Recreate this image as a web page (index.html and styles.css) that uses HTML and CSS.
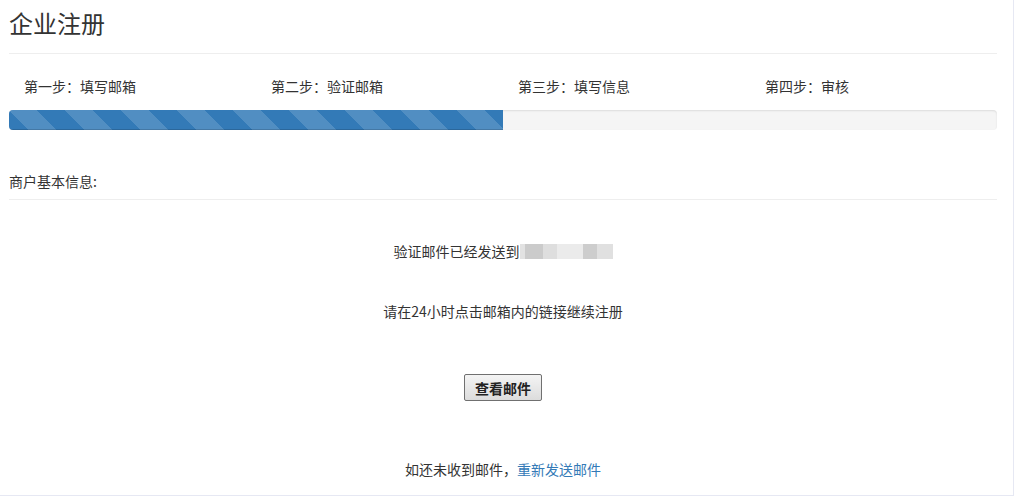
FILE: index.html
```html
<!DOCTYPE html>
<html lang="zh-CN">
<head>
<meta charset="utf-8">
<title>企业注册</title>
<link rel="stylesheet" href="styles.css">
</head>
<body>
<div class="page">
  <h1 class="page-title">企业注册</h1>
  <div class="steps">
    <div class="step">第一步：填写邮箱</div>
    <div class="step">第二步：验证邮箱</div>
    <div class="step">第三步：填写信息</div>
    <div class="step">第四步：审核</div>
  </div>
  <div class="progress">
    <div class="progress-bar" style="width: 50%"></div>
  </div>
  <div class="section-title">商户基本信息:</div>
  <div class="notice">
    <p class="line first">验证邮件已经发送到<span class="masked"></span></p>
    <p class="line">请在24小时点击邮箱内的链接继续注册</p>
    <div class="btn-row"><button class="btn">查看邮件</button></div>
    <p class="line resend">如还未收到邮件，<a class="link" href="#">重新发送邮件</a></p>
  </div>
</div>
</body>
</html>
```
FILE: styles.css
```css
* { box-sizing: border-box; }
html, body { margin: 0; padding: 0; background: #fff; }
body {
  font-family: "Noto Sans CJK SC", "Liberation Sans", sans-serif;
  font-size: 14px;
  color: #333;
}
.page {
  width: 1014px;
  height: 496px;
  padding: 0 16px 0 9px;
  border-right: 1px solid #e6e8f3;
  border-bottom: 1px solid #e6e8f3;
}
.page-title {
  margin: 0;
  height: 54px;
  line-height: 45px;
  font-size: 24px;
  font-weight: normal;
  color: #333;
  border-bottom: 1px solid #eeeeee;
}
.steps {
  display: grid;
  grid-template-columns: repeat(4, 1fr);
  margin-top: 22px;
  height: 20px;
  line-height: 20px;
}
.step { padding-left: 15px; }
.progress {
  margin-top: 14px;
  height: 20px;
  background: #f5f5f5;
  border-radius: 4px;
  overflow: hidden;
  box-shadow: inset 0 1px 2px rgba(0,0,0,.1);
}
.progress-bar {
  height: 100%;
  background-color: #337ab7;
  background-image: linear-gradient(45deg, rgba(255,255,255,.15) 25%, transparent 25%, transparent 50%, rgba(255,255,255,.15) 50%, rgba(255,255,255,.15) 75%, transparent 75%, transparent);
  background-size: 56px 56px;
  box-shadow: inset 0 -1px 0 rgba(0,0,0,.15);
}
.section-title {
  margin-top: 41px;
  line-height: 20px;
  padding-bottom: 8px;
  border-bottom: 1px solid #eeeeee;
}
.notice { text-align: center; }
.line { margin: 0; line-height: 20px; }
.line.first { margin-top: 41px; }
.line + .line { margin-top: 40px; }
.masked {
  display: inline-block;
  width: 93px;
  height: 15px;
  vertical-align: -2px;
  background: linear-gradient(90deg, #e2e2e2 0, #e2e2e2 5px, #cbcbcb 5px, #cbcbcb 23px, #dedede 23px, #dedede 37px, #ebebeb 37px, #ebebeb 63px, #cdcdcd 63px, #cdcdcd 77px, #e0e0e0 77px, #e0e0e0 93px);
}
.btn-row { margin-top: 53px; height: 27px; }
.btn {
  height: 27px;
  padding: 0 10px;
  font-family: inherit;
  font-size: 14px;
  font-weight: bold;
  color: #222;
  background: linear-gradient(#f4f4f4, #dcdcdc);
  border: 1px solid #707070;
  border-radius: 2px;
}
.line.resend { margin-top: 58px; }
.link { color: #337ab7; text-decoration: none; }
```
